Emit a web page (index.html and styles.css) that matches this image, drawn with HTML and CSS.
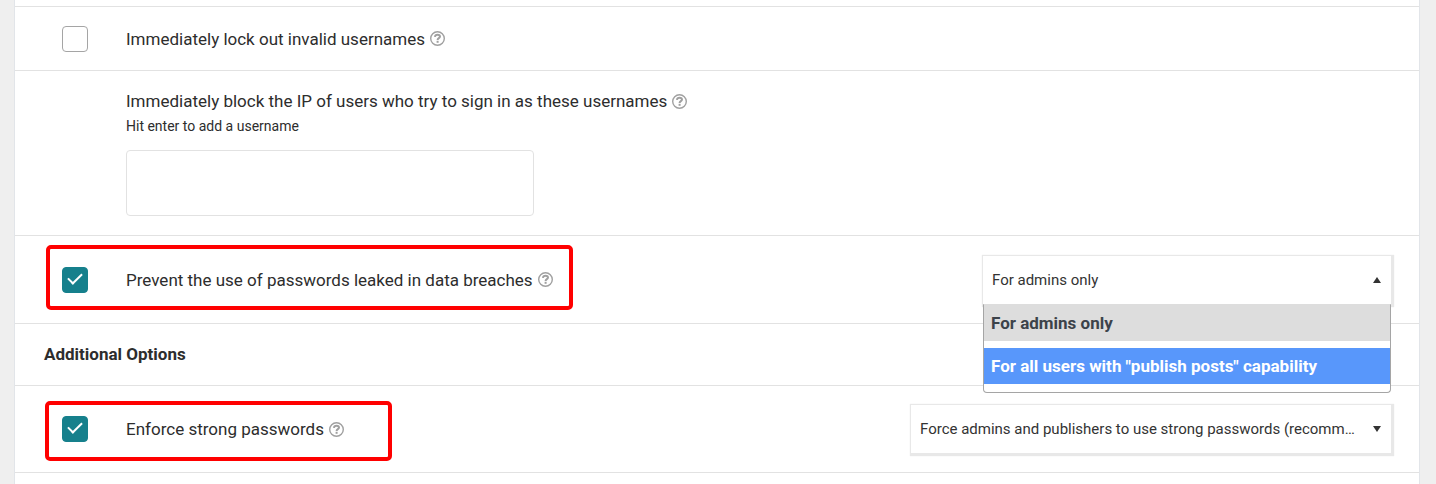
FILE: index.html
```html
<!DOCTYPE html>
<html lang="en">
<head>
  <meta charset="UTF-8">
  <meta name="viewport" content="width=device-width, initial-scale=1.0">
  <title>Brute Force Protection</title>
  <link rel="stylesheet" href="styles.css">
</head>
<body>

  <!-- help icon shared by all options -->
  <svg class="sprite" aria-hidden="true">
    <symbol id="help" viewBox="0 0 15 15">
      <circle cx="7.5" cy="7.5" r="6.8" fill="none" stroke="currentColor" stroke-width="1.4"/>
      <path d="M4.9 5.8C5.1 4.3 6.1 3.7 7.5 3.7C9 3.7 10 4.5 10 5.6C10 7.2 7.6 7.2 7.6 9.1" fill="none" stroke="currentColor" stroke-width="2"/>
      <path d="M6.6 9.8h2v2h-2z" fill="currentColor"/>
    </symbol>
  </svg>

  <main class="card">
    <div class="row row-prev"></div>

    <div class="row row-single">
      <div class="option">
        <input type="checkbox" id="lockInvalid">
        <label for="lockInvalid">Immediately lock out invalid usernames</label>
        <a href="#" class="help" aria-label="Help"><svg><use href="#help"/></svg></a>
      </div>
    </div>

    <div class="row row-block">
      <div class="field-title">
        <label for="blockedUsers">Immediately block the IP of users who try to sign in as these usernames</label>
        <a href="#" class="help" aria-label="Help"><svg><use href="#help"/></svg></a>
      </div>
      <p class="hint">Hit enter to add a username</p>
      <textarea id="blockedUsers"></textarea>
    </div>

    <div class="row row-select">
      <div class="option">
        <input type="checkbox" id="breachEnabled" checked>
        <label for="breachEnabled">Prevent the use of passwords leaked in data breaches</label>
        <a href="#" class="help" aria-label="Help"><svg><use href="#help"/></svg></a>
        <span class="marker marker-breach"></span>
      </div>
      <div class="dropdown dropdown-breach open">
        <select aria-label="Prevent the use of leaked passwords">
          <option selected>For admins only</option>
          <option>For all users with "publish posts" capability</option>
        </select>
        <ul class="dropdown-list" role="listbox" aria-label="Options">
          <li role="option" aria-selected="true" class="selected">For admins only</li>
          <li role="option" aria-selected="false" class="active">For all users with "publish posts" capability</li>
        </ul>
      </div>
    </div>

    <div class="row row-heading">
      <h2>Additional Options</h2>
    </div>

    <div class="row row-select row-strong">
      <div class="option">
        <input type="checkbox" id="strongPasswd" checked>
        <label for="strongPasswd">Enforce strong passwords</label>
        <a href="#" class="help" aria-label="Help"><svg><use href="#help"/></svg></a>
        <span class="marker marker-strong"></span>
      </div>
      <div class="dropdown dropdown-strong">
        <select aria-label="Enforce strong passwords">
          <option selected>Force admins and publishers to use strong passwords (recommended)</option>
          <option>Force all members to use strong passwords</option>
        </select>
      </div>
    </div>
  </main>

</body>
</html>
```
FILE: styles.css
```css
* {
  box-sizing: border-box;
}

body {
  margin: 0;
  padding: 0 16px 0 14px;
  min-height: 100vh;
  display: flex;
  background-color: #efefef;
  font-family: Roboto, "Liberation Sans", sans-serif;
  font-size: 17px;
  line-height: 20px;
  color: #2d2d2d;
}

.sprite {
  position: absolute;
  width: 0;
  height: 0;
}

.card {
  flex: 1;
  min-width: 0;
  background-color: white;
  border-left: 1px solid #e2e5e9;
  border-right: 1px solid #e2e5e9;
}

/* rows */
.row {
  border-bottom: 1px solid #e2e2e2;
  padding: 0 28px 0 47px;
}

.row-prev {
  height: 7px;
}

.row-single {
  display: flex;
  align-items: center;
  min-height: 64px;
}

.row-block {
  padding: 20px 28px 19px 111px;
}

.row-select {
  display: flex;
  align-items: center;
  justify-content: space-between;
  min-height: 88px;
}

.row-strong {
  min-height: 87px;
}

.row-heading {
  padding: 20px 28px 21px 29px;
}

h2 {
  margin: 0;
  font-size: 17px;
  line-height: 20px;
  font-weight: bold;
}

/* options */
.option {
  position: relative;
  display: flex;
  align-items: center;
}

.field-title {
  display: flex;
  align-items: center;
}

input[type="checkbox"] {
  appearance: none;
  display: flex;
  justify-content: center;
  width: 26px;
  height: 26px;
  margin: 0 38px 0 0;
  border: 1px solid #a5a5a5;
  border-radius: 4px;
  background-color: white;
}

input[type="checkbox"]:checked {
  border-color: #16808c;
  background-color: #16808c;
}

/* tick */
input[type="checkbox"]:checked::before {
  content: '';
  width: 6px;
  height: 12px;
  margin-top: 2px;
  border: solid white;
  border-width: 0 2px 2px 0;
  transform: rotate(45deg);
}

.help {
  margin-left: 5px;
  color: #a0a0a0;
}

.help svg {
  display: block;
  width: 15px;
  height: 15px;
}

.hint {
  margin: 5px 0 14px;
  font-size: 14px;
}

textarea {
  display: block;
  width: 408px;
  max-width: 100%;
  height: 66px;
  border: 1px solid #e2e2e2;
  border-radius: 4px;
  resize: none;
}

/* red markers */
.marker {
  position: absolute;
  border: 4px solid #ff0000;
  border-radius: 5px;
  pointer-events: none;
}

.marker-breach {
  inset: -22px -20px -17px -16px;
}

.marker-strong {
  inset: -15px -48px -19px -17px;
}

/* dropdowns */
.dropdown {
  position: relative;
}

.dropdown-breach {
  width: 408px;
}

.dropdown-strong {
  width: 480px;
}

.dropdown select {
  appearance: none;
  display: block;
  width: 100%;
  height: 48px;
  padding: 0 32px 0 9px;
  border: none;
  border-radius: 0;
  background-color: white;
  box-shadow: 1px 1px 1px 2px #e8e8e8;
  font-family: inherit;
  font-size: 15px;
  color: #333;
  text-overflow: ellipsis;
}

.dropdown::after {
  content: '';
  position: absolute;
  top: 21px;
  right: 10px;
  border: 4px solid transparent;
  border-top: 6px solid #333;
  border-bottom: none;
}

.dropdown.open::after {
  border-top: none;
  border-bottom: 6px solid #333;
}

.dropdown-list {
  position: absolute;
  top: 100%;
  left: 0;
  right: 0;
  z-index: 10;
  display: flex;
  flex-direction: column;
  gap: 7px;
  margin: 0;
  padding: 0 0 8px;
  list-style: none;
  background-color: white;
  border: 1px solid #a5a5a5;
  border-top: 1px solid #ddd;
  border-radius: 0 0 4px 4px;
  font-weight: bold;
}

.dropdown-list li {
  padding: 8px 7px;
}

.dropdown-list .selected {
  background-color: #ddd;
  color: #3c434a;
}

.dropdown-list .active {
  background-color: #5897fb;
  color: white;
}
```
